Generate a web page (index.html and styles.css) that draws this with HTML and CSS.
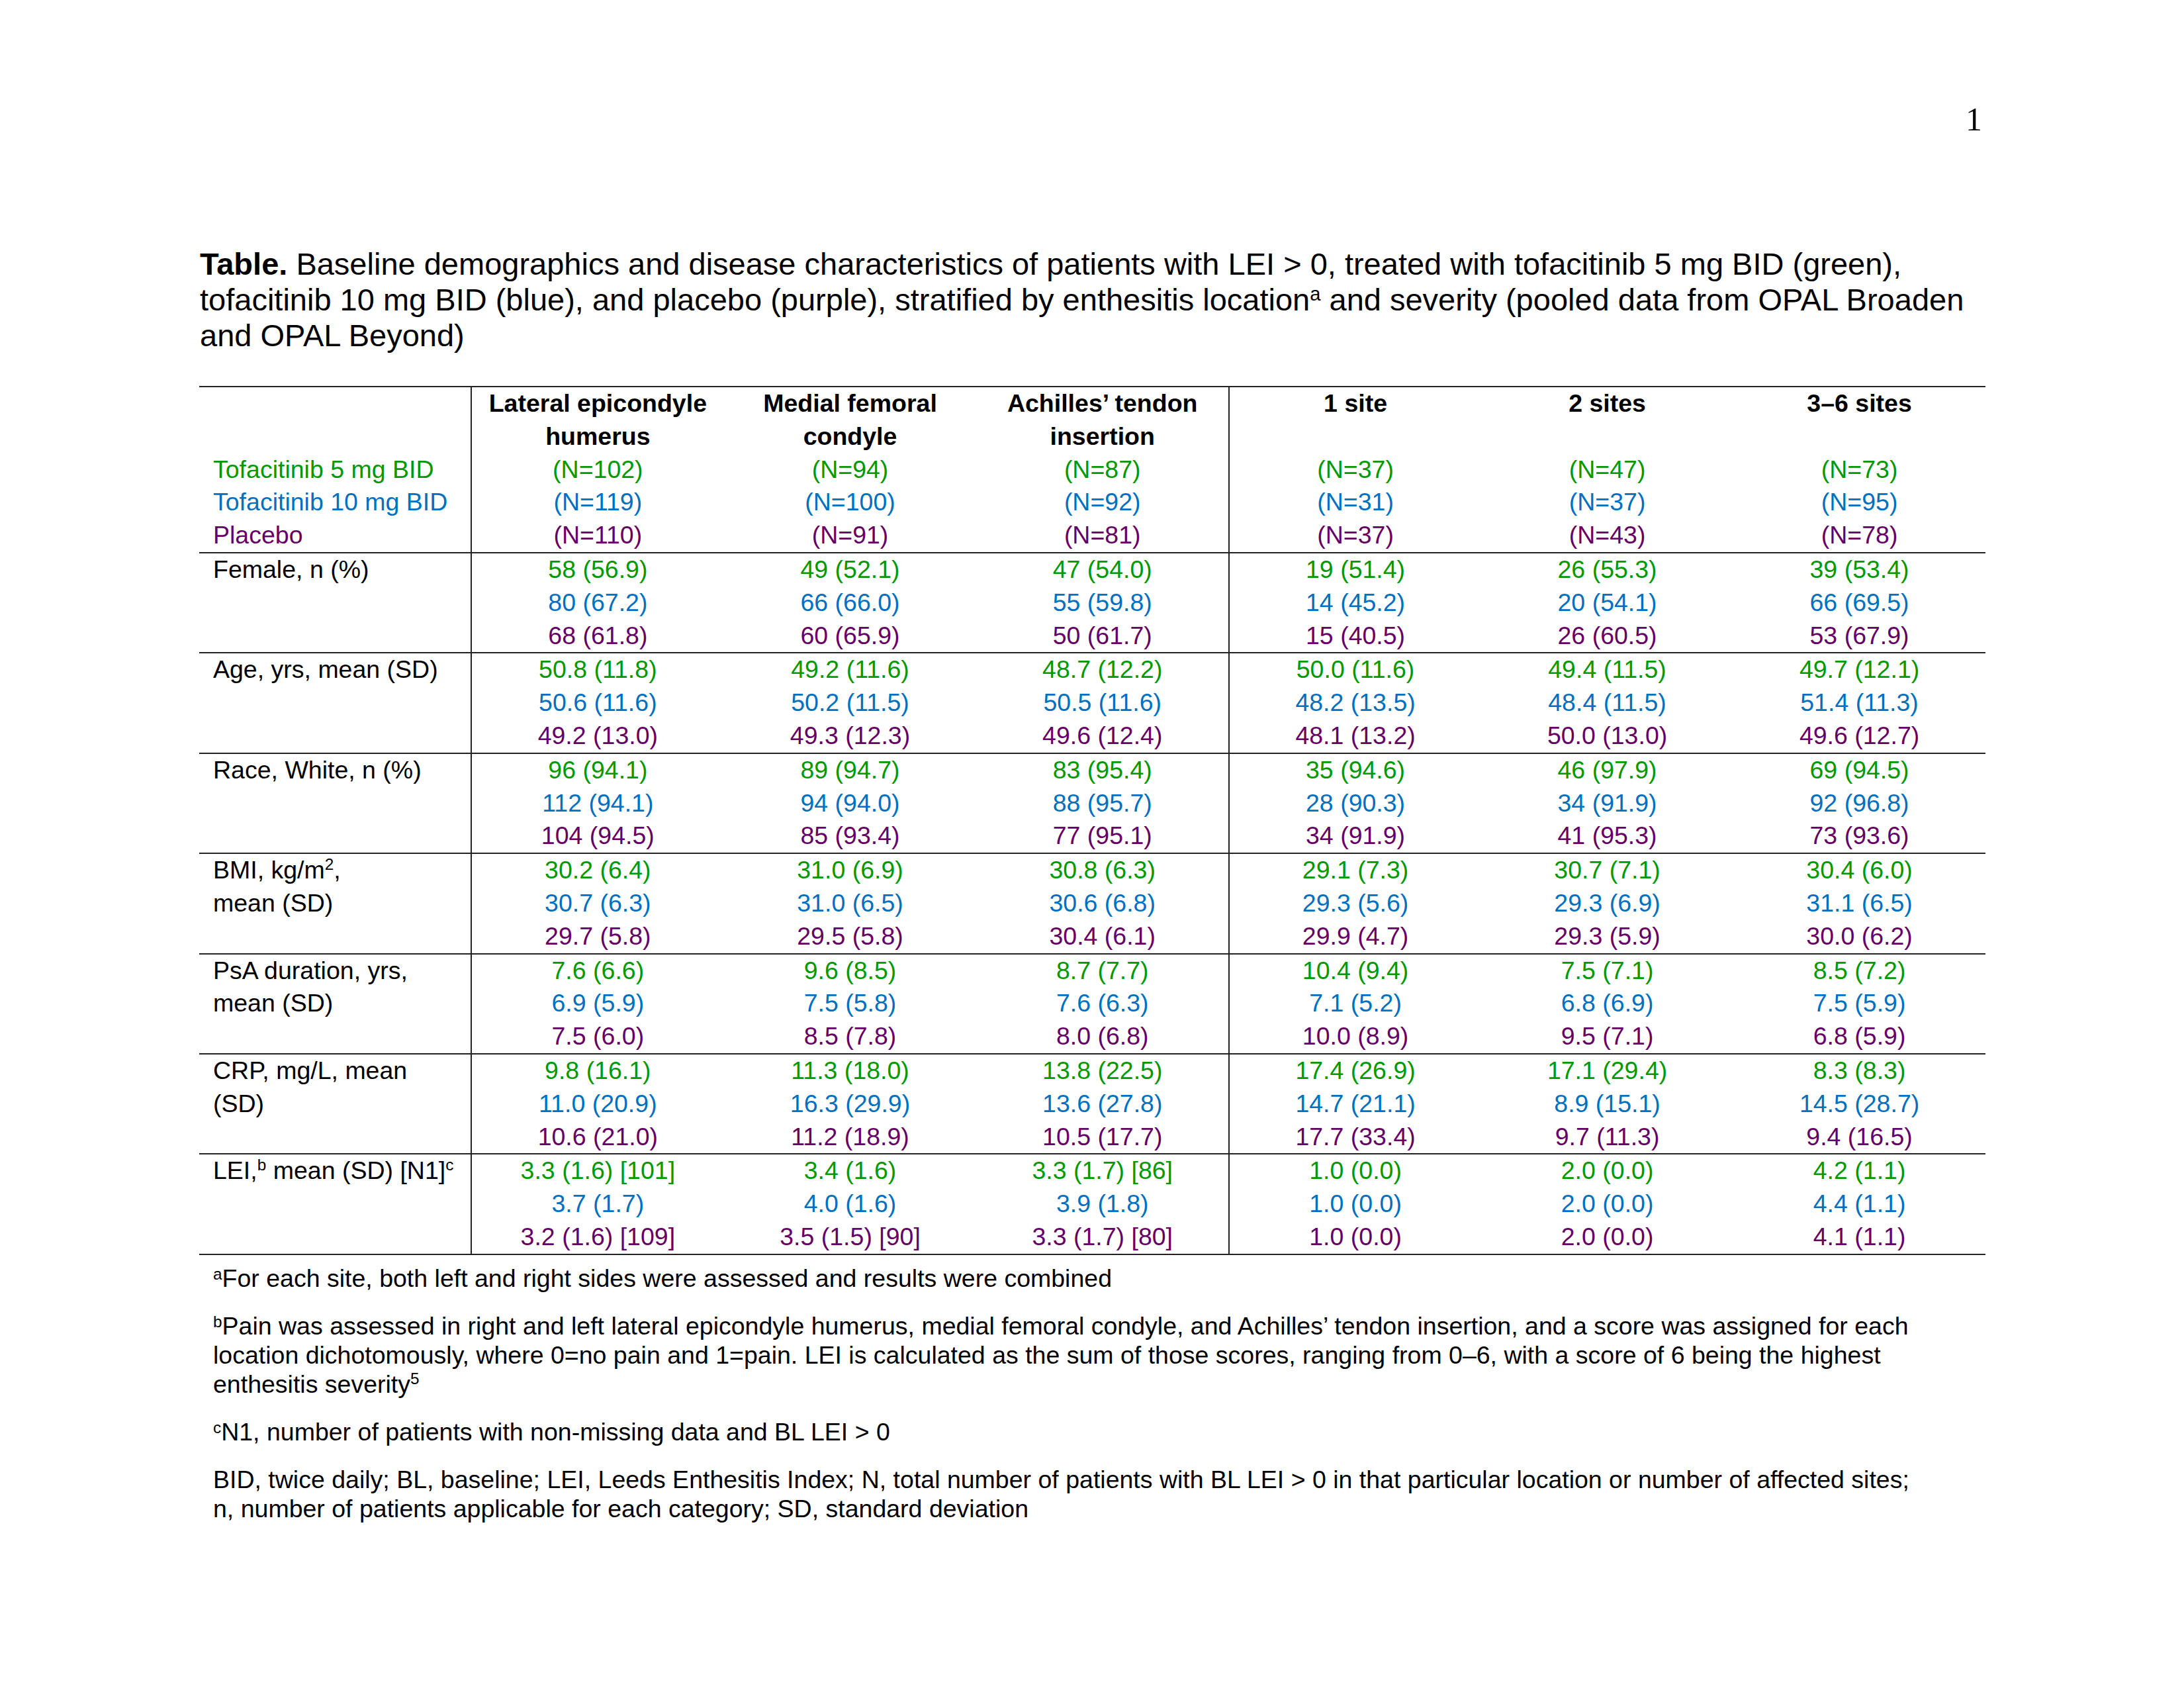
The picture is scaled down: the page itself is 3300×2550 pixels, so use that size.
FILE: index.html
```html
<!DOCTYPE html>
<html lang="en">
<head>
<meta charset="utf-8">
<title>Table</title>
<link rel="stylesheet" href="styles.css">
</head>
<body>
<div class="page">
  <div class="pagenum">1</div>
  <p class="title"><b>Table.</b> Baseline demographics and disease characteristics of patients with LEI &gt; 0, treated with tofacitinib 5 mg BID (green),<br>tofacitinib 10 mg BID (blue), and placebo (purple), stratified by enthesitis location<sup>a</sup> and severity (pooled data from OPAL Broaden<br>and OPAL Beyond)</p>

  <table class="data">
    <colgroup>
      <col class="w-label"><col class="w-a"><col class="w-a"><col class="w-a"><col class="w-b"><col class="w-b"><col class="w-b">
    </colgroup>
    <thead>
      <tr>
        <th class="label div"><span class="ln">&nbsp;</span><span class="ln">&nbsp;</span><span class="ln g5">Tofacitinib 5 mg BID</span><span class="ln g10">Tofacitinib 10 mg BID</span><span class="ln gp">Placebo</span></th>
        <th><span class="hd">Lateral epicondyle<br>humerus</span><span class="ln g5">(N=102)</span><span class="ln g10">(N=119)</span><span class="ln gp">(N=110)</span></th>
        <th><span class="hd">Medial femoral<br>condyle</span><span class="ln g5">(N=94)</span><span class="ln g10">(N=100)</span><span class="ln gp">(N=91)</span></th>
        <th class="div"><span class="hd">Achilles’ tendon<br>insertion</span><span class="ln g5">(N=87)</span><span class="ln g10">(N=92)</span><span class="ln gp">(N=81)</span></th>
        <th><span class="hd">1 site<br>&nbsp;</span><span class="ln g5">(N=37)</span><span class="ln g10">(N=31)</span><span class="ln gp">(N=37)</span></th>
        <th><span class="hd">2 sites<br>&nbsp;</span><span class="ln g5">(N=47)</span><span class="ln g10">(N=37)</span><span class="ln gp">(N=43)</span></th>
        <th><span class="hd">3–6 sites<br>&nbsp;</span><span class="ln g5">(N=73)</span><span class="ln g10">(N=95)</span><span class="ln gp">(N=78)</span></th>
      </tr>
    </thead>
    <tbody>
      <tr>
        <td class="label div">Female, n (%)</td>
        <td><span class="ln g5">58 (56.9)</span><span class="ln g10">80 (67.2)</span><span class="ln gp">68 (61.8)</span></td>
        <td><span class="ln g5">49 (52.1)</span><span class="ln g10">66 (66.0)</span><span class="ln gp">60 (65.9)</span></td>
        <td class="div"><span class="ln g5">47 (54.0)</span><span class="ln g10">55 (59.8)</span><span class="ln gp">50 (61.7)</span></td>
        <td><span class="ln g5">19 (51.4)</span><span class="ln g10">14 (45.2)</span><span class="ln gp">15 (40.5)</span></td>
        <td><span class="ln g5">26 (55.3)</span><span class="ln g10">20 (54.1)</span><span class="ln gp">26 (60.5)</span></td>
        <td><span class="ln g5">39 (53.4)</span><span class="ln g10">66 (69.5)</span><span class="ln gp">53 (67.9)</span></td>
      </tr>
      <tr>
        <td class="label div">Age, yrs, mean (SD)</td>
        <td><span class="ln g5">50.8 (11.8)</span><span class="ln g10">50.6 (11.6)</span><span class="ln gp">49.2 (13.0)</span></td>
        <td><span class="ln g5">49.2 (11.6)</span><span class="ln g10">50.2 (11.5)</span><span class="ln gp">49.3 (12.3)</span></td>
        <td class="div"><span class="ln g5">48.7 (12.2)</span><span class="ln g10">50.5 (11.6)</span><span class="ln gp">49.6 (12.4)</span></td>
        <td><span class="ln g5">50.0 (11.6)</span><span class="ln g10">48.2 (13.5)</span><span class="ln gp">48.1 (13.2)</span></td>
        <td><span class="ln g5">49.4 (11.5)</span><span class="ln g10">48.4 (11.5)</span><span class="ln gp">50.0 (13.0)</span></td>
        <td><span class="ln g5">49.7 (12.1)</span><span class="ln g10">51.4 (11.3)</span><span class="ln gp">49.6 (12.7)</span></td>
      </tr>
      <tr>
        <td class="label div">Race, White, n (%)</td>
        <td><span class="ln g5">96 (94.1)</span><span class="ln g10">112 (94.1)</span><span class="ln gp">104 (94.5)</span></td>
        <td><span class="ln g5">89 (94.7)</span><span class="ln g10">94 (94.0)</span><span class="ln gp">85 (93.4)</span></td>
        <td class="div"><span class="ln g5">83 (95.4)</span><span class="ln g10">88 (95.7)</span><span class="ln gp">77 (95.1)</span></td>
        <td><span class="ln g5">35 (94.6)</span><span class="ln g10">28 (90.3)</span><span class="ln gp">34 (91.9)</span></td>
        <td><span class="ln g5">46 (97.9)</span><span class="ln g10">34 (91.9)</span><span class="ln gp">41 (95.3)</span></td>
        <td><span class="ln g5">69 (94.5)</span><span class="ln g10">92 (96.8)</span><span class="ln gp">73 (93.6)</span></td>
      </tr>
      <tr>
        <td class="label div">BMI, kg/m<sup class="sup">2</sup>,<br>mean (SD)</td>
        <td><span class="ln g5">30.2 (6.4)</span><span class="ln g10">30.7 (6.3)</span><span class="ln gp">29.7 (5.8)</span></td>
        <td><span class="ln g5">31.0 (6.9)</span><span class="ln g10">31.0 (6.5)</span><span class="ln gp">29.5 (5.8)</span></td>
        <td class="div"><span class="ln g5">30.8 (6.3)</span><span class="ln g10">30.6 (6.8)</span><span class="ln gp">30.4 (6.1)</span></td>
        <td><span class="ln g5">29.1 (7.3)</span><span class="ln g10">29.3 (5.6)</span><span class="ln gp">29.9 (4.7)</span></td>
        <td><span class="ln g5">30.7 (7.1)</span><span class="ln g10">29.3 (6.9)</span><span class="ln gp">29.3 (5.9)</span></td>
        <td><span class="ln g5">30.4 (6.0)</span><span class="ln g10">31.1 (6.5)</span><span class="ln gp">30.0 (6.2)</span></td>
      </tr>
      <tr>
        <td class="label div">PsA duration, yrs,<br>mean (SD)</td>
        <td><span class="ln g5">7.6 (6.6)</span><span class="ln g10">6.9 (5.9)</span><span class="ln gp">7.5 (6.0)</span></td>
        <td><span class="ln g5">9.6 (8.5)</span><span class="ln g10">7.5 (5.8)</span><span class="ln gp">8.5 (7.8)</span></td>
        <td class="div"><span class="ln g5">8.7 (7.7)</span><span class="ln g10">7.6 (6.3)</span><span class="ln gp">8.0 (6.8)</span></td>
        <td><span class="ln g5">10.4 (9.4)</span><span class="ln g10">7.1 (5.2)</span><span class="ln gp">10.0 (8.9)</span></td>
        <td><span class="ln g5">7.5 (7.1)</span><span class="ln g10">6.8 (6.9)</span><span class="ln gp">9.5 (7.1)</span></td>
        <td><span class="ln g5">8.5 (7.2)</span><span class="ln g10">7.5 (5.9)</span><span class="ln gp">6.8 (5.9)</span></td>
      </tr>
      <tr>
        <td class="label div">CRP, mg/L, mean<br>(SD)</td>
        <td><span class="ln g5">9.8 (16.1)</span><span class="ln g10">11.0 (20.9)</span><span class="ln gp">10.6 (21.0)</span></td>
        <td><span class="ln g5">11.3 (18.0)</span><span class="ln g10">16.3 (29.9)</span><span class="ln gp">11.2 (18.9)</span></td>
        <td class="div"><span class="ln g5">13.8 (22.5)</span><span class="ln g10">13.6 (27.8)</span><span class="ln gp">10.5 (17.7)</span></td>
        <td><span class="ln g5">17.4 (26.9)</span><span class="ln g10">14.7 (21.1)</span><span class="ln gp">17.7 (33.4)</span></td>
        <td><span class="ln g5">17.1 (29.4)</span><span class="ln g10">8.9 (15.1)</span><span class="ln gp">9.7 (11.3)</span></td>
        <td><span class="ln g5">8.3 (8.3)</span><span class="ln g10">14.5 (28.7)</span><span class="ln gp">9.4 (16.5)</span></td>
      </tr>
      <tr>
        <td class="label div">LEI,<sup class="sup">b</sup> mean (SD) [N1]<sup class="sup">c</sup></td>
        <td><span class="ln g5">3.3 (1.6) [101]</span><span class="ln g10">3.7 (1.7)</span><span class="ln gp">3.2 (1.6) [109]</span></td>
        <td><span class="ln g5">3.4 (1.6)</span><span class="ln g10">4.0 (1.6)</span><span class="ln gp">3.5 (1.5) [90]</span></td>
        <td class="div"><span class="ln g5">3.3 (1.7) [86]</span><span class="ln g10">3.9 (1.8)</span><span class="ln gp">3.3 (1.7) [80]</span></td>
        <td><span class="ln g5">1.0 (0.0)</span><span class="ln g10">1.0 (0.0)</span><span class="ln gp">1.0 (0.0)</span></td>
        <td><span class="ln g5">2.0 (0.0)</span><span class="ln g10">2.0 (0.0)</span><span class="ln gp">2.0 (0.0)</span></td>
        <td><span class="ln g5">4.2 (1.1)</span><span class="ln g10">4.4 (1.1)</span><span class="ln gp">4.1 (1.1)</span></td>
      </tr>
    </tbody>
  </table>

  <div class="notes">
    <p><sup class="fn">a</sup>For each site, both left and right sides were assessed and results were combined</p>
    <p><sup class="fn">b</sup>Pain was assessed in right and left lateral epicondyle humerus, medial femoral condyle, and Achilles’ tendon insertion, and a score was assigned for each<br>location dichotomously, where 0=no pain and 1=pain. LEI is calculated as the sum of those scores, ranging from 0–6, with a score of 6 being the highest<br>enthesitis severity<sup class="sup">5</sup></p>
    <p><sup class="fn">c</sup>N1, number of patients with non-missing data and BL LEI &gt; 0</p>
    <p>BID, twice daily; BL, baseline; LEI, Leeds Enthesitis Index; N, total number of patients with BL LEI &gt; 0 in that particular location or number of affected sites;<br>n, number of patients applicable for each category; SD, standard deviation</p>
  </div>
</div>
</body>
</html>
```

FILE: styles.css
```css
html, body {
  margin: 0;
  padding: 0;
  background: #ffffff;
}

.page {
  width: 2711px;
  padding: 152px 0 0 289px;
  font-family: "Liberation Sans", Arial, sans-serif;
  color: #000;
}

.pagenum {
  font-family: "Liberation Serif", "Times New Roman", serif;
  font-size: 50px;
  line-height: 56px;
  text-align: right;
  padding-right: 5px;
}

.title {
  margin: 164px 0 0 13px;
  font-size: 47px;
  line-height: 54px;
  white-space: nowrap;
}

.title sup {
  font-size: 0.62em;
  line-height: 0;
  vertical-align: 0.5em;
}

.data {
  margin: 49px 0 0 12px;
  width: 2699px;
  table-layout: fixed;
  border-collapse: collapse;
  font-size: 37.5px;
  line-height: 49.8px;
  border-top: 2px solid #222;
}

.w-label { width: 411px; }
.w-a { width: 381.7px; }
.w-b { width: 381px; }

.data th,
.data td {
  padding: 0;
  vertical-align: top;
  text-align: center;
  font-weight: normal;
  border-bottom: 2px solid #222;
  white-space: nowrap;
}

.data .label {
  text-align: left;
  padding-left: 21px;
}

.data .div {
  border-right: 2px solid #222;
}

.ln {
  display: block;
}

.hd {
  display: block;
  font-weight: bold;
}

.g5 { color: #009900; }
.g10 { color: #0070c0; }
.gp { color: #660066; }

.sup {
  font-size: 0.65em;
  line-height: 0;
  vertical-align: 0.55em;
}

.notes {
  margin: 13px 0 0 33px;
  font-size: 37.5px;
  line-height: 44px;
}

.notes p {
  margin: 0 0 28px 0;
  white-space: nowrap;
}

.fn {
  font-size: 0.65em;
  line-height: 0;
  vertical-align: 0.45em;
}
```
